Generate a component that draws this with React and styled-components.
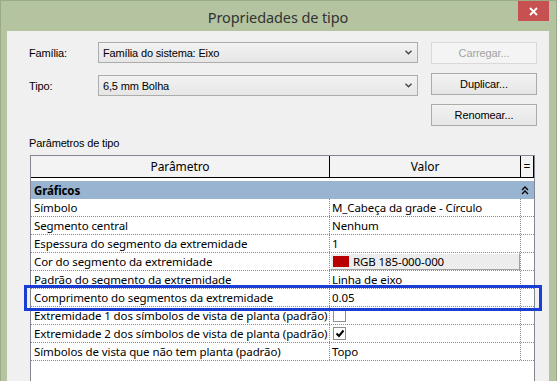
import React from 'react'
import styled, { createGlobalStyle } from 'styled-components'

const colors = {
  frame: '#B4C4A1',
  frameEdge: '#9AAC87',
  close: '#C75050',
  dialog: '#F0F0F0',
  border: '#ACACAC',
  gridBorder: '#828790',
  dotted: '#8A8A8A',
  group: '#99B4D1',
  swatch: '#B90000',
  mark: '#1A3ED4',
  text: '#000000',
  disabled: '#A3A3A3'
}

const uiFont = `"Liberation Sans", Arial, sans-serif`
const gridFont = `"Noto Sans", "Open Sans", sans-serif`

const GlobalStyle = createGlobalStyle`
  html, body {
    margin: 0;
    padding: 0;
  }

  body {
    width: 557px;
    height: 381px;
    overflow: hidden;
    background: ${colors.frame};
  }
`

// ======================
// WINDOW
// ======================

const Window = styled.div`
  position: relative;
  box-sizing: border-box;
  width: 557px;
  height: 381px;
  display: flex;
  flex-direction: column;
  padding: 0 7px 0 6px;
  background: ${colors.frame};
  border: 1px solid ${colors.frameEdge};
  border-bottom: none;
  overflow: hidden;
`

const TitleBar = styled.div`
  display: grid;
  grid-template-columns: 1fr auto 1fr;
  height: 30px;
  flex: none;
`

const Title = styled.div`
  grid-column: 2;
  align-self: center;
  margin-top: 1px;
  font-family: ${gridFont};
  font-size: 14.5px;
  color: #333333;
  letter-spacing: -0.1px;
`

const CloseButton = styled.div`
  grid-column: 3;
  justify-self: end;
  align-self: start;
  width: 31px;
  height: 20px;
  display: flex;
  align-items: center;
  justify-content: center;
  background: ${colors.close};
`

const Dialog = styled.div`
  flex: 1;
  display: flex;
  flex-direction: column;
  min-height: 0;
  background: ${colors.dialog};
  padding: 11px 12px 0 22px;
`

// ======================
// TOP FIELDS
// ======================

const TopSection = styled.div`
  display: flex;
  align-items: flex-start;
`

const Fields = styled.div`
  display: flex;
  flex-direction: column;
  gap: 12px;
`

const Field = styled.div`
  display: grid;
  grid-template-columns: 69px 320px;
  align-items: center;
`

const Label = styled.span`
  font-family: ${uiFont};
  font-size: 11px;
  letter-spacing: -0.15px;
  color: ${colors.text};
`

const Combo = styled.div`
  box-sizing: border-box;
  height: 21px;
  display: flex;
  align-items: center;
  justify-content: space-between;
  padding: 0 5px 0 4px;
  border: 1px solid ${colors.border};
  background: linear-gradient(#F2F2F2, #E6E6E6);
  font-family: ${uiFont};
  font-size: 11px;
  letter-spacing: -0.15px;
  color: ${colors.text};
`

const Buttons = styled.div`
  display: flex;
  flex-direction: column;
  gap: 9px;
  margin-left: 13px;
`

const Button = styled.div`
  box-sizing: border-box;
  width: 106px;
  height: 22px;
  display: flex;
  align-items: center;
  justify-content: center;
  border: 1px solid ${props => props.disabled ? '#D9D9D9' : colors.border};
  background: ${props => props.disabled ? '#F4F4F4' : 'linear-gradient(#F2F2F2, #E6E6E6)'};
  color: ${props => props.disabled ? colors.disabled : colors.text};
  font-family: ${uiFont};
  font-size: 11px;
  letter-spacing: -0.1px;
`

const SectionLabel = styled(Label)`
  display: block;
  margin: 11px 0 5px 0;
  line-height: 13px;
`

// ======================
// PROPERTY GRID
// ======================

const Grid = styled.div`
  flex: 1;
  margin-left: 1px;
  width: 505px;
  box-sizing: border-box;
  border: 1px solid ${colors.gridBorder};
  border-bottom: none;
  background: #FFFFFF;
  font-family: ${gridFont};
  font-size: 11.5px;
  letter-spacing: -0.1px;
  color: ${colors.text};
`

const HeaderRow = styled.div`
  display: grid;
  grid-template-columns: 299px 191px 1fr;
  height: 22px;
  box-sizing: border-box;
  border-bottom: 1px solid #000000;
  background: #F3F3F3;
  margin-bottom: 3px;
`

const HeaderCell = styled.div`
  display: flex;
  align-items: center;
  justify-content: center;
  border-right: 1px solid #000000;
  font-size: 12px;
`

const GroupRow = styled.div`
  display: grid;
  grid-template-columns: 1fr 13px;
  align-items: center;
  height: 18px;
  padding-left: 3px;
  background: ${colors.group};
  font-weight: bold;
`

const Row = styled.div`
  display: grid;
  grid-template-columns: 299px 191px 1fr;
  height: 18px;
  box-sizing: border-box;
  border-bottom: 1px dotted ${colors.dotted};
`

const Cell = styled.div`
  display: flex;
  align-items: center;
  padding-left: ${props => props.value ? '2px' : '3px'};
  border-right: ${props => props.last ? 'none' : `1px dotted ${colors.dotted}`};
  white-space: nowrap;
  overflow: hidden;
`

const ColorButton = styled.div`
  flex: 1;
  align-self: stretch;
  display: flex;
  align-items: center;
  gap: 4px;
  margin-left: -2px;
  padding-left: 2px;
  box-sizing: border-box;
  border-top: 1px solid #FFFFFF;
  border-left: 1px solid #FFFFFF;
  border-right: 1px solid #A0A0A0;
  border-bottom: 1px solid #A0A0A0;
  background: #EDEDED;
`

const Swatch = styled.span`
  width: 16px;
  height: 11px;
  background: ${colors.swatch};
`

const CheckBox = styled.span`
  box-sizing: border-box;
  width: 13px;
  height: 13px;
  margin-left: 1px;
  border: 1px solid #8E8F8F;
  background: #FFFFFF;
  display: flex;
  align-items: center;
  justify-content: center;
`

const Highlight = styled.div`
  position: absolute;
  left: 23px;
  top: 284px;
  width: 518px;
  height: 26px;
  box-sizing: border-box;
  border: 3px solid ${colors.mark};
  pointer-events: none;
`

const Chevron = () => (
  <svg width='7' height='5' viewBox='0 0 7 5'>
    <path d='M0.5 0.8 L3.5 3.8 L6.5 0.8' fill='none' stroke='#444' strokeWidth='1.4' />
  </svg>
)

const DoubleUp = () => (
  <svg width='8' height='9' viewBox='0 0 8 9'>
    <path d='M1 4 L4 1 L7 4 M1 8 L4 5 L7 8' fill='none' stroke='#000' strokeWidth='1.3' />
  </svg>
)

const CloseIcon = () => (
  <svg width='9' height='9' viewBox='0 0 9 9'>
    <path d='M1 1 L8 8 M8 1 L1 8' stroke='#FFFFFF' strokeWidth='1.8' />
  </svg>
)

const Check = () => (
  <svg width='10' height='9' viewBox='0 0 10 9'>
    <path d='M1.5 4.5 L4 7 L8.5 1.5' fill='none' stroke='#000' strokeWidth='2' />
  </svg>
)

const rows = [
  { name: 'Símbolo', value: 'M_Cabeça da grade - Círculo' },
  { name: 'Segmento central', value: 'Nenhum' },
  { name: 'Espessura do segmento da extremidade', value: '1' },
  { name: 'Cor do segmento da extremidade', color: 'RGB 185-000-000' },
  { name: 'Padrão do segmento da extremidade', value: 'Linha de eixo' },
  { name: 'Comprimento do segmentos da extremidade', value: '0.05' },
  { name: 'Extremidade 1 dos símbolos de vista de planta (padrão)', check: false },
  { name: 'Extremidade 2 dos símbolos de vista de planta (padrão)', check: true },
  { name: 'Símbolos de vista que não tem planta (padrão)', value: 'Topo' }
]

const renderValue = row => {
  if (row.color) {
    return (
      <ColorButton>
        <Swatch />
        <span>{row.color}</span>
      </ColorButton>
    )
  }
  if (row.check !== undefined) {
    return <CheckBox>{row.check && <Check />}</CheckBox>
  }
  return row.value
}

export default function App () {
  return (
    <Window>
      <GlobalStyle />
      <TitleBar>
        <Title>Propriedades de tipo</Title>
        <CloseButton><CloseIcon /></CloseButton>
      </TitleBar>
      <Dialog>
        <TopSection>
          <Fields>
            <Field>
              <Label>Família:</Label>
              <Combo>Família do sistema: Eixo<Chevron /></Combo>
            </Field>
            <Field>
              <Label>Tipo:</Label>
              <Combo>6,5 mm Bolha<Chevron /></Combo>
            </Field>
          </Fields>
          <Buttons>
            <Button disabled>Carregar...</Button>
            <Button>Duplicar...</Button>
            <Button>Renomear...</Button>
          </Buttons>
        </TopSection>
        <SectionLabel>Parâmetros de tipo</SectionLabel>
        <Grid>
          <HeaderRow>
            <HeaderCell>Parâmetro</HeaderCell>
            <HeaderCell>Valor</HeaderCell>
            <HeaderCell>=</HeaderCell>
          </HeaderRow>
          <GroupRow>
            <span>Gráficos</span>
            <DoubleUp />
          </GroupRow>
          {rows.map(row => (
            <Row key={row.name}>
              <Cell>{row.name}</Cell>
              <Cell value>{renderValue(row)}</Cell>
              <Cell last />
            </Row>
          ))}
        </Grid>
      </Dialog>
      <Highlight />
    </Window>
  )
}
